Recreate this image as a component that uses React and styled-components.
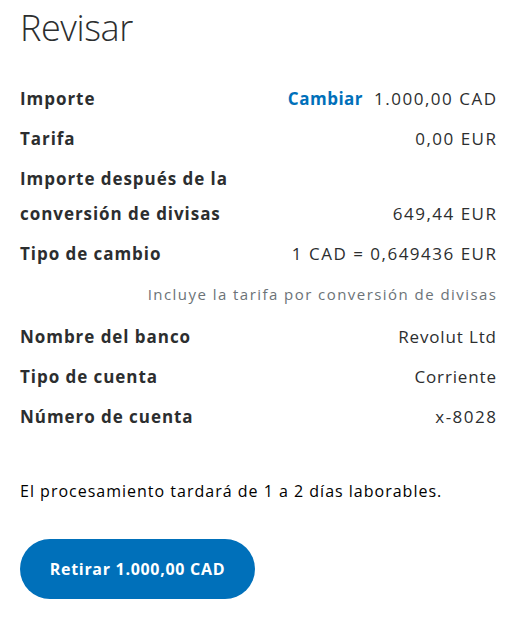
import React from "react";
import styled, { createGlobalStyle } from "styled-components";

const Global = createGlobalStyle`
  html, body { margin: 0; padding: 0; background: #ffffff; }
  body { font-family: "Open Sans", "Noto Sans", sans-serif; color: #2c2e2f; }
`;

const Page = styled.div`
  width: 476px;
  padding: 0 30px 0 20px;
`;

const Title = styled.h1`
  margin: 0;
  padding-top: 4px;
  font-size: 36px;
  font-weight: 300;
  line-height: 48px;
  color: #2c2e2f;
  letter-spacing: -0.4px;
`;

const List = styled.div`
  display: flex;
  flex-direction: column;
  margin-top: 26px;
`;

const Row = styled.div`
  display: flex;
  justify-content: space-between;
  align-items: flex-end;
  padding: 2.5px 0;
  line-height: 35px;
  font-size: 17px;
`;

const Label = styled.div`
  font-weight: 700;
  color: #2c2e2f;
  letter-spacing: 0.95px;
  max-width: ${(p) => p.$max || "none"};
`;

const Value = styled.div`
  display: flex;
  gap: 11px;
  font-weight: 400;
  color: #2c2e2f;
  white-space: nowrap;
`;

const Amount = styled.span`
  letter-spacing: ${(p) => (p.$numeric ? "1.5px" : "0.85px")};
  margin-right: ${(p) => (p.$numeric ? "-1.5px" : "-0.85px")};
`;

const Link = styled.a`
  color: #0070ba;
  font-weight: 700;
  text-decoration: none;
  letter-spacing: 0.5px;
`;

const Note = styled.div`
  text-align: right;
  font-size: 15px;
  line-height: 24px;
  padding: 9px 0 10px;
  color: #6c7378;
  letter-spacing: 1.45px;
  margin-right: -1.45px;
`;

const Info = styled.p`
  margin: 43px 0 0;
  font-size: 16px;
  line-height: 24px;
  letter-spacing: 1px;
  color: #000;
`;

const Button = styled.button`
  margin-top: 36px;
  height: 60px;
  width: 235px;
  border: none;
  border-radius: 30px;
  background: #0070ba;
  color: #fff;
  font-family: inherit;
  font-size: 16px;
  font-weight: 700;
  letter-spacing: 0.7px;
  cursor: pointer;
`;

const rows = [
  { label: "Importe", value: "1.000,00 CAD", link: "Cambiar", numeric: true },
  { label: "Tarifa", value: "0,00 EUR", numeric: true },
  { label: "Importe después de la conversión de divisas", value: "649,44 EUR", max: "240px", numeric: true },
  { label: "Tipo de cambio", value: "1 CAD = 0,649436 EUR", numeric: true },
];

const bank = [
  { label: "Nombre del banco", value: "Revolut Ltd" },
  { label: "Tipo de cuenta", value: "Corriente" },
  { label: "Número de cuenta", value: "x-8028", numeric: true },
];

export default function App() {
  return (
    <Page>
      <Global />
      <Title>Revisar</Title>
      <List>
        {rows.map((r) => (
          <Row key={r.label}>
            <Label $max={r.max}>{r.label}</Label>
            <Value>
              {r.link && <Link href="#">{r.link}</Link>}
              <Amount $numeric={r.numeric}>{r.value}</Amount>
            </Value>
          </Row>
        ))}
        <Note>Incluye la tarifa por conversión de divisas</Note>
        {bank.map((r) => (
          <Row key={r.label}>
            <Label>{r.label}</Label>
            <Value>
              <Amount $numeric={r.numeric}>{r.value}</Amount>
            </Value>
          </Row>
        ))}
      </List>
      <Info>El procesamiento tardará de 1 a 2 días laborables.</Info>
      <Button>Retirar 1.000,00 CAD</Button>
    </Page>
  );
}
